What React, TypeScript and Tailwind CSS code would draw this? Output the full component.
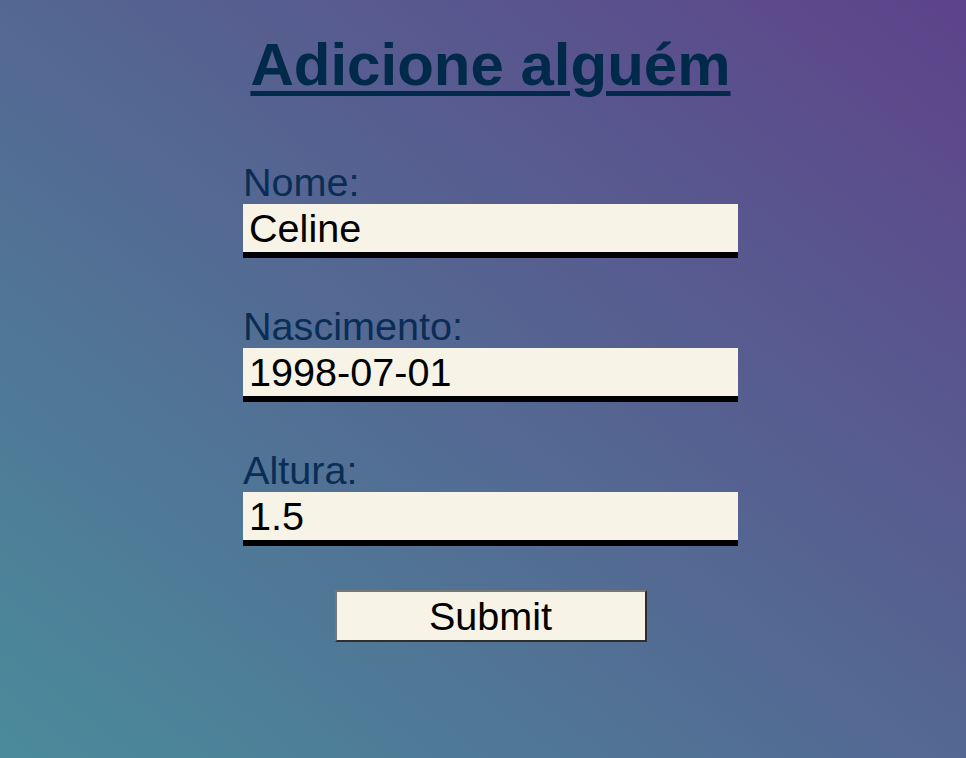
const FIELDS = [
  { label: "Nome:", value: "Celine" },
  { label: "Nascimento:", value: "1998-07-01" },
  { label: "Altura:", value: "1.5" },
];

export default function App() {
  return (
    <div className="min-h-screen w-full bg-[linear-gradient(to_top_right,#4a8b9b,#5e438a)] font-['Liberation_Sans',Arial,sans-serif]">
      <div className="flex flex-col items-center pl-[15px] pt-[30px]">
        <h1 className="text-[60px] leading-[69px] font-bold text-[#012a4a] underline decoration-[5px] underline-offset-[6px]">
          Adicione alguém
        </h1>
        <form className="mt-[61px] flex w-[495px] flex-col" onSubmit={(e) => e.preventDefault()}>
          {FIELDS.map((f) => (
            <label key={f.label} className="mb-[46px] flex flex-col">
              <span className="text-[39.6px] leading-[44px] text-[#0a2d55]">{f.label}</span>
              <input
                defaultValue={f.value}
                className="box-border h-[54px] w-full border-b-[6px] border-black bg-[#f7f3e7] px-[6px] py-[2px] text-[39.6px] leading-[44px] text-black outline-none"
              />
            </label>
          ))}
          <button
            type="submit"
            className="mx-auto -mt-[2px] box-border h-[52px] w-[312px] border-2 border-t-[#777] border-l-[#777] border-b-[#2e2e2e] border-r-[#2e2e2e] bg-[#f7f3e7] text-[39.6px] leading-[44px] text-black"
          >
            Submit
          </button>
        </form>
      </div>
    </div>
  );
}
